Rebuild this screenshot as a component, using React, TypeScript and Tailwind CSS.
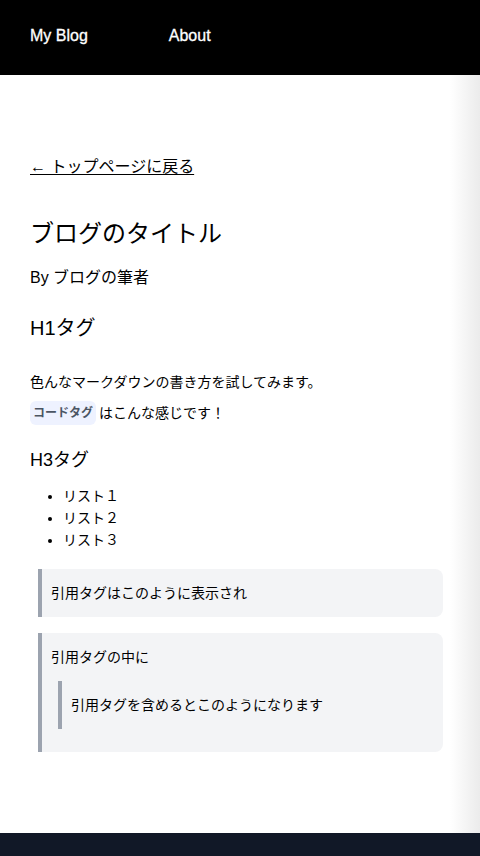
import React from "react";

const font = { fontFamily: '"Liberation Sans", "Noto Sans CJK JP", sans-serif' };

export default function App() {
  return (
    <div className="min-h-screen bg-white text-black" style={font}>
      <header className="h-[75px] bg-black flex items-center px-[30px] pb-[4px] text-white text-base font-medium">
        <span className="[-webkit-text-stroke:0.3px_white]">My Blog</span>
        <span className="ml-[81px] [-webkit-text-stroke:0.3px_white]">About</span>
      </header>
      <main className="bg-[linear-gradient(to_right,#ffffff_450px,#ebebeb_480px)] px-[30px] pt-[80px] pb-[81px]">
        <a className="block text-base leading-6 underline underline-offset-2 text-black">← トップページに戻る</a>
        <h1 className="mt-[39px] text-2xl leading-8 font-normal">ブログのタイトル</h1>
        <p className="mt-[16px] text-base leading-6">By ブログの筆者</p>
        <h2 className="mt-[24px] text-xl leading-7 font-normal">H1タグ</h2>
        <p className="mt-[30px] text-sm leading-5">色んなマークダウンの書き方を試してみます。</p>
        <p className="mt-[9px] text-sm leading-6">
          <code
            className="inline-block h-6 leading-6 px-[3px] rounded-md bg-[#eef2ff] text-[#4b5563] text-[12px] font-bold align-top"
            style={font}
          >
            コードタグ
          </code>
          <span className="ml-[3px]">はこんな感じです！</span>
        </p>
        <h3 className="mt-[21px] text-lg leading-7 font-normal">H3タグ</h3>
        <ul className="mt-[11px] list-disc pl-[33px] text-sm leading-[22px]">
          <li>リスト１</li>
          <li>リスト２</li>
          <li>リスト３</li>
        </ul>
        <blockquote className="mt-[18px] ml-2 mr-[7px] border-l-4 border-[#9ca3af] bg-[#f3f4f6] rounded-r-lg pl-[9px] py-[14px] text-sm leading-5">
          引用タグはこのように表示され
        </blockquote>
        <blockquote className="mt-[16px] ml-2 mr-[7px] border-l-4 border-[#9ca3af] bg-[#f3f4f6] rounded-r-lg pl-[9px] pt-[14px] pb-[23px] text-sm leading-5">
          <p>引用タグの中に</p>
          <blockquote className="mt-[14px] ml-[7px] border-l-4 border-[#9ca3af] pl-[9px] py-[14px]">
            引用タグを含めるとこのようになります
          </blockquote>
        </blockquote>
      </main>
      <footer className="h-[60px] bg-[#111827]" />
    </div>
  );
}
